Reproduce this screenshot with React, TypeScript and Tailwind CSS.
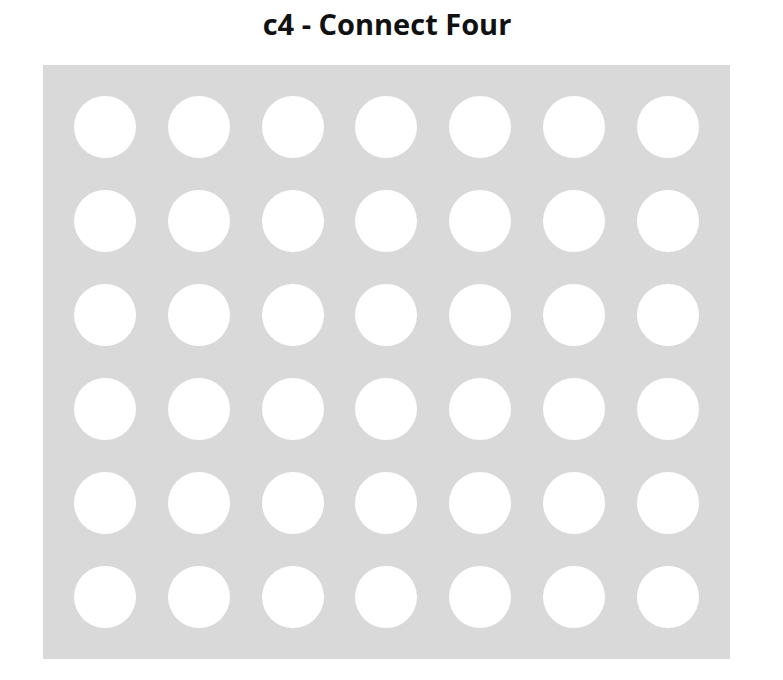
const ROWS = 6;
const COLS = 7;

export default function App() {
  const cells = Array.from({ length: ROWS * COLS }, (_, i) => i);

  return (
    <div className="min-h-screen bg-white" style={{ fontFamily: "'Open Sans', sans-serif" }}>
      <h1 className="pr-[9px] pt-[5px] text-center text-[29px] font-bold leading-[38px] text-[#111]">
        c4 - Connect Four
      </h1>
      <div className="ml-[43px] mt-[22px] grid h-[594px] w-[687px] grid-cols-[repeat(7,62px)] grid-rows-[repeat(6,62px)] content-between justify-between bg-[#d9d9d9] px-[31px] py-[31px]">
        {cells.map((i) => (
          <div key={i} className="h-[62px] w-[62px] rounded-full bg-white" />
        ))}
      </div>
    </div>
  );
}
